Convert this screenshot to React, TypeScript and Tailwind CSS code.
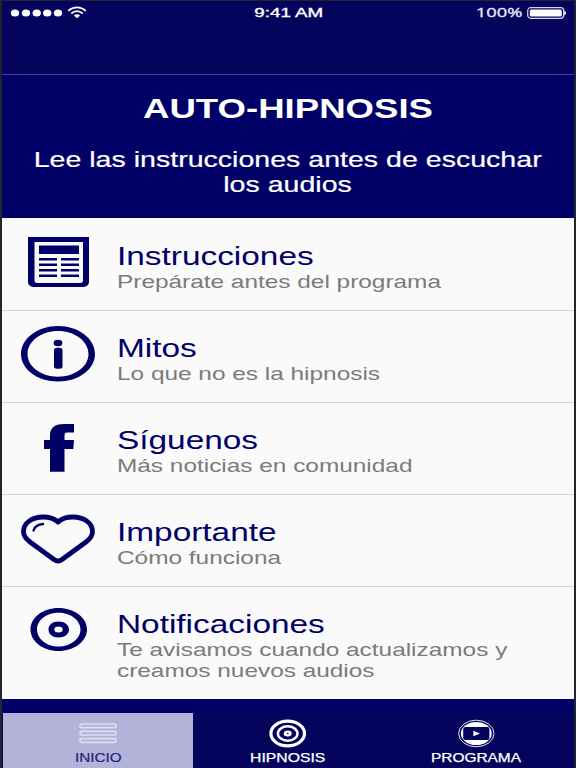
import type { ReactNode } from "react";

const NAVY = "#000066";

// Text set in a horizontally expanded grotesque.
function Wide({ children, className }: { children: ReactNode; className: string }) {
  return <span className={`block w-max whitespace-nowrap ${className}`}>{children}</span>;
}

function NewsIcon() {
  return (
    <svg width="76" height="60" viewBox="0 0 76 60" fill={NAVY}>
      <path fillRule="evenodd" d="M8 5H69V50C69 53 66 55 62.500 55H14.500C11 55 8 53 8 50ZM14.500 10V48.500Q14.500 51 17.500 51H60Q63 51 63 48.500V10Z" />
      <path d="M19 13.500H59V22H19Z" />
      <path d="M19 26H37V28.500H19ZM41 26H59V28.500H41ZM19 31.500H37V34H19ZM41 31.500H59V34H41ZM19 37H37V39.500H19ZM41 37H59V39.500H41ZM19 42.500H37V45H19ZM41 42.500H59V45H41Z" />
    </svg>
  );
}

function InfoIcon() {
  return (
    <svg width="76" height="60" viewBox="0 0 76 60" fill={NAVY}>
      <path fillRule="evenodd" d="M38 2C58.400 2 75 14.500 75 30S58.400 57.500 38 57.500S1 45.500 1 30S17.600 2 38 2ZM38 7C21.200 7 7.500 17.300 7.500 30S21.200 52.700 38 52.700S68.500 42.700 68.500 30S54.800 7 38 7Z" />
      <ellipse cx="38" cy="19" rx="4.400" ry="3.300" />
      <rect x="34" y="23.700" width="8.500" height="21" rx="3" ry="2.500" />
    </svg>
  );
}

function FacebookIcon() {
  return (
    <svg width="76" height="60" viewBox="0 0 76 60" fill={NAVY}>
      <path d="M30 55.800V33H24V24H30V19C30 11 36 8 44 8H54V16.500H48C45 16.500 44.500 18 44.500 20V24H54L53.300 33H44.500V55.800Z" />
    </svg>
  );
}

function HeartIcon() {
  return (
    <svg width="76" height="60" viewBox="0 0 76 60" fill="none" stroke={NAVY} strokeLinejoin="round" strokeLinecap="round">
      <path strokeWidth="4.800" d="M38 14C34 10 30 9 23 9C12 9 3.500 15 3.500 23.500C3.500 28 6 31 10 34L34 51.500Q38 54.500 42 51.500L66 34C70 31 72.500 28 72.500 23.500C72.500 15 64 9 53 9C46 9 42 10 38 14Z" />
      <path strokeWidth="2.300" d="M13.500 22.500C14.500 19 18 16.500 23 16" />
    </svg>
  );
}

function DiscIcon() {
  return (
    <svg width="76" height="60" viewBox="0 0 76 60" fill={NAVY}>
      <path fillRule="evenodd" d="M38.500 8C54 8 67 17.500 67 29.500S54 51 38.500 51S10.500 41.500 10.500 29.500S23 8 38.500 8ZM38.500 12.800C26.500 12.800 17 20.300 17 29.500S26.500 46.500 38.500 46.500S60.500 38.700 60.500 29.500S50.500 12.800 38.500 12.800Z" />
      <path fillRule="evenodd" d="M38.500 21.500C44.500 21.500 49 25 49 29.500S44.500 37.500 38.500 37.500S28.500 34 28.500 29.500S32.500 21.500 38.500 21.500ZM38.500 26.500A4.200 3 0 1 0 38.500 32.500A4.200 3 0 1 0 38.500 26.500Z" />
    </svg>
  );
}

const rows = [
  { icon: <NewsIcon />, title: "Instrucciones", lines: ["Prepárate antes del programa"] },
  { icon: <InfoIcon />, title: "Mitos", lines: ["Lo que no es la hipnosis"] },
  { icon: <FacebookIcon />, title: "Síguenos", lines: ["Más noticias en comunidad"] },
  { icon: <HeartIcon />, title: "Importante", lines: ["Cómo funciona"] },
  { icon: <DiscIcon />, title: "Notificaciones", lines: ["Te avisamos cuando actualizamos y", "creamos nuevos audios"] },
];

function StatusBar() {
  return (
    <div className="flex h-[23px] items-center justify-between pr-[7px] pl-2">
      <svg className="w-[160px]" height="23" viewBox="0 0 160 23" fill="white">
        <ellipse cx="5" cy="12" rx="4.200" ry="3.500" />
        <ellipse cx="16" cy="12" rx="4.200" ry="3.500" />
        <ellipse cx="26.700" cy="12" rx="4.200" ry="3.500" />
        <ellipse cx="37.200" cy="12" rx="4.200" ry="3.500" />
        <ellipse cx="48" cy="12" rx="4.200" ry="3.500" />
        <g fill="none" stroke="white" strokeWidth="1.700">
          <path d="M58.200 9.900C63.500 5.300 70.500 5.300 75.800 9.900" />
          <path d="M61.300 12.500C65 9.500 69 9.500 72.700 12.500" />
        </g>
        <path d="M63.800 14.500Q67 12.200 70.200 14.500L67 17.300Z" />
      </svg>
      <Wide className="scale-x-[1.390] text-[13.500px] leading-[22px] text-white [-webkit-text-stroke:0.35px_white]">9:41 AM</Wide>
      <div className="flex w-[160px] items-center justify-end gap-[5px]">
        <Wide className="origin-right scale-x-[1.360] font-['Open_Sans',sans-serif] text-[13.500px] leading-[23px] text-[#ececfa] [-webkit-text-stroke:0.300px_#ececfa]">100%</Wide>
        <svg width="40" height="14" viewBox="0 0 40 14">
          <rect x="0.700" y="1.700" width="36" height="10.600" rx="3" fill="none" stroke="#d5d5ee" strokeWidth="1.200" />
          <rect x="2.800" y="3.400" width="32" height="7.200" rx="1.500" fill="white" />
          <path d="M37.200 4.500Q41 7 37.200 9.500Z" fill="white" />
        </svg>
      </div>
    </div>
  );
}

export default function App() {
  return (
    <div className="flex h-[768px] w-[576px] flex-col overflow-hidden border-x-2 border-t border-[#222230] bg-[#000066] font-['Liberation_Sans',Arial,sans-serif]">
      <header className="h-[74px] shrink-0 border-b border-[#45458c] bg-[#04045c]">
        <StatusBar />
      </header>

      <section className="flex h-[143px] shrink-0 flex-col items-center pt-[19px] text-white">
        <h1><Wide className="scale-x-[1.330] text-[27.500px] leading-[30px] font-bold">AUTO-HIPNOSIS</Wide></h1>
        <div className="mt-[23px] flex flex-col items-center">
          <Wide className="scale-x-[1.298] text-[22px] leading-[25px] [-webkit-text-stroke:0.2px_white]">Lee las instrucciones antes de escuchar</Wide>
          <Wide className="scale-x-[1.298] text-[22px] leading-[25px] [-webkit-text-stroke:0.2px_white]">los audios</Wide>
        </div>
      </section>

      <main className="h-[481px] shrink-0 bg-[#fafafa] pt-px">
        {rows.map((row) => (
          <div key={row.title} className="flex h-[92px] border-b border-[#d2d2d2] pl-[18px] last:h-[112px] last:border-b-0">
            <div className="w-[97px] shrink-0 pt-[13px]">{row.icon}</div>
            <div className="pt-[23px]">
              <h2 className="mb-px"><Wide className="origin-left scale-x-[1.335] text-[25px] leading-[28px] text-[#000066]">{row.title}</Wide></h2>
              {row.lines.map((line) => (
                <Wide key={line} className="origin-left scale-x-[1.318] text-[18.500px] leading-[21px] text-[#7b7b7b]">{line}</Wide>
              ))}
            </div>
          </div>
        ))}
      </main>

      <nav className="mt-[14px] grid h-[56px] shrink-0 grid-cols-[191px_189px_187px] bg-[#04045c]">
        <div className="ml-px flex flex-col items-center bg-[#b3b3d9] pt-[9px]">
          <svg width="38" height="24" viewBox="0 0 38 24" fill="none" stroke="#dedef0" strokeWidth="1.700">
            <rect x="1" y="2" width="36" height="3.700" rx="1.500" />
            <rect x="1" y="9.300" width="36" height="3.700" rx="1.500" />
            <rect x="1" y="16.700" width="36" height="3.700" rx="1.500" />
          </svg>
          <Wide className="mt-[5px] scale-x-[1.270] text-[12px] leading-[14px] text-[#22227a] [-webkit-text-stroke:0.2px_#22227a]">INICIO</Wide>
        </div>
        <div className="flex flex-col items-center pt-[6px] text-white">
          <svg width="38" height="30" viewBox="0 0 38 30" fill="none" stroke="white">
            <ellipse cx="18.700" cy="14.500" rx="16.800" ry="12.300" strokeWidth="3.200" />
            <ellipse cx="18.700" cy="14.500" rx="9.800" ry="7.200" strokeWidth="2.500" />
            <ellipse cx="18.700" cy="14.500" rx="4" ry="3" fill="white" stroke="none" />
            <ellipse cx="18.700" cy="14.500" rx="0.900" ry="0.700" fill="#04045c" stroke="none" />
          </svg>
          <Wide className="mt-[2px] scale-x-[1.310] text-[12px] leading-[14px] [-webkit-text-stroke:0.25px_white]">HIPNOSIS</Wide>
        </div>
        <div className="flex flex-col items-center pt-[6px] text-white">
          <svg width="38" height="30" viewBox="0 0 38 30">
            <ellipse cx="19.300" cy="14.500" rx="17.700" ry="13.300" fill="none" stroke="#e6e6f5" strokeWidth="1" />
            <ellipse cx="19.300" cy="14.500" rx="15.400" ry="11.500" fill="white" />
            <rect x="6.200" y="8" width="26.200" height="13" rx="2" fill="#04045c" />
            <path d="M16.300 11.800V17.200L23 14.500Z" fill="white" />
          </svg>
          <Wide className="mt-[2px] ml-px scale-x-[1.285] text-[12px] leading-[14px] [-webkit-text-stroke:0.25px_white]">PROGRAMA</Wide>
        </div>
      </nav>
    </div>
  );
}
